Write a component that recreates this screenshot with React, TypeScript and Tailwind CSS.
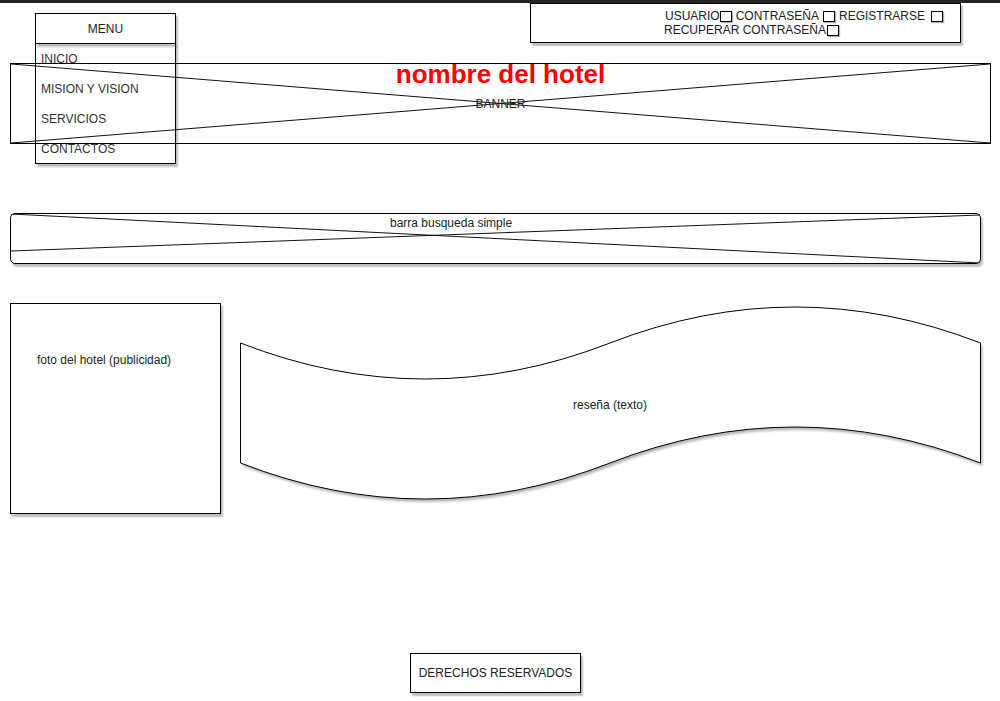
import React from "react";

const shadow = "shadow-[2px_3px_1.5px_rgba(0,0,0,0.25)]";

function Check({ className = "" }: { className?: string }) {
  return (
    <span
      className={`inline-block w-[12px] h-[11px] border border-black bg-white align-[-2px] shadow-[1px_1px_1px_rgba(0,0,0,0.3)] ${className}`}
    />
  );
}

export default function App() {
  return (
    <div className="relative w-[1000px] h-[701px] bg-white overflow-hidden font-['Liberation_Sans',Arial,sans-serif] text-[12px] text-[#222]">
      <div className="h-[3px] bg-[#252525]" />

      {/* login box */}
      <div className="flex">
        <div className={`ml-[530px] w-[431px] h-[40px] border border-black bg-white ${shadow} pl-[134px] pt-[5px] leading-[14px] whitespace-nowrap`}>
          <div>
            <span>USUARIO</span>
            <Check />
            <span className="ml-[4px]">CONTRASEÑA</span>
            <Check className="ml-[4px]" />
            <span className="ml-[4px]">REGISTRARSE</span>
            <Check className="ml-[6px]" />
          </div>
          <div className="-ml-px">
            <span>RECUPERAR CONTRASEÑA</span>
            <Check className="ml-[1px]" />
          </div>
        </div>
      </div>

      {/* banner */}
      <div className="relative z-10 mt-[20px] ml-[10px] w-[981px] h-[81px] border border-black flex items-center justify-center">
        <svg className="absolute inset-0 w-full h-full" viewBox="0 0 979 79" preserveAspectRatio="none">
          <line x1="0" y1="0" x2="979" y2="79" stroke="#111" strokeWidth="1" />
          <line x1="0" y1="79" x2="979" y2="0" stroke="#111" strokeWidth="1" />
        </svg>
        <div className="absolute left-0 right-0 top-[-5px] text-center text-[26px] leading-[30px] font-bold text-[#ff0000]">
          nombre del hotel
        </div>
        <span className="relative leading-[14px]">BANNER</span>
      </div>

      {/* search bar */}
      <div className={`relative mt-[69px] ml-[10px] w-[971px] h-[51px] border border-black rounded-[5px] bg-white ${shadow}`}>
        <svg className="absolute inset-0 w-full h-full" viewBox="0 0 969 49" preserveAspectRatio="none">
          <line x1="0" y1="0" x2="969" y2="49" stroke="#111" strokeWidth="1" />
          <line x1="0" y1="37" x2="969" y2="1" stroke="#111" strokeWidth="1" />
        </svg>
        <div className="relative pt-[2px] pl-[379px] leading-[14px]">barra busqueda simple</div>
      </div>

      {/* content row */}
      <div className="flex items-start mt-[39px]">
        <div className={`ml-[10px] w-[211px] h-[211px] border border-black bg-white ${shadow} pl-[26px] pt-[49px] leading-[14px]`}>
          foto del hotel (publicidad)
        </div>
        <div className="relative ml-[19px] w-[748px] h-[206px] flex items-center justify-center">
          <svg className="absolute inset-0 w-full h-full" viewBox="0 0 748 206">
            <defs>
              <filter id="blur" x="-5%" y="-5%" width="110%" height="120%">
                <feGaussianBlur stdDeviation="1" />
              </filter>
            </defs>
            <path
              d="M0.5 40 Q185 112 370 40 Q555 -32 740.5 40 L740.5 160 Q555 88 370 160 Q185 232 0.5 160 Z"
              fill="#000"
              fillOpacity="0.28"
              transform="translate(2 3)"
              filter="url(#blur)"
            />
            <path
              d="M0.5 40 Q185 112 370 40 Q555 -32 740.5 40 L740.5 160 Q555 88 370 160 Q185 232 0.5 160 Z"
              fill="#fff"
              stroke="#000"
              strokeWidth="1"
            />
          </svg>
          <span className="relative pr-[8px] pb-[3px] leading-[14px]">reseña (texto)</span>
        </div>
      </div>

      {/* footer */}
      <div className={`mt-[139px] ml-[410px] w-[171px] h-[40px] border border-black bg-white ${shadow} flex items-center justify-center leading-[14px]`}>
        DERECHOS RESERVADOS
      </div>

      {/* menu overlay */}
      <div className="absolute left-[35px] top-[13px] w-[141px] text-[#333]">
        <div className={`relative z-[1] h-[31px] border border-black bg-white ${shadow} flex items-center justify-center text-[#222]`}>
          MENU
        </div>
        <div className={`-mt-px h-[121px] border border-black bg-white ${shadow}`}>
          <div className="h-[30px] flex items-center pl-[5px]">INICIO</div>
          <div className="h-[30px] flex items-center pl-[5px]">MISION Y VISION</div>
          <div className="h-[30px] flex items-center pl-[5px]">SERVICIOS</div>
          <div className="h-[30px] flex items-center pl-[5px]">CONTACTOS</div>
        </div>
      </div>
    </div>
  );
}
